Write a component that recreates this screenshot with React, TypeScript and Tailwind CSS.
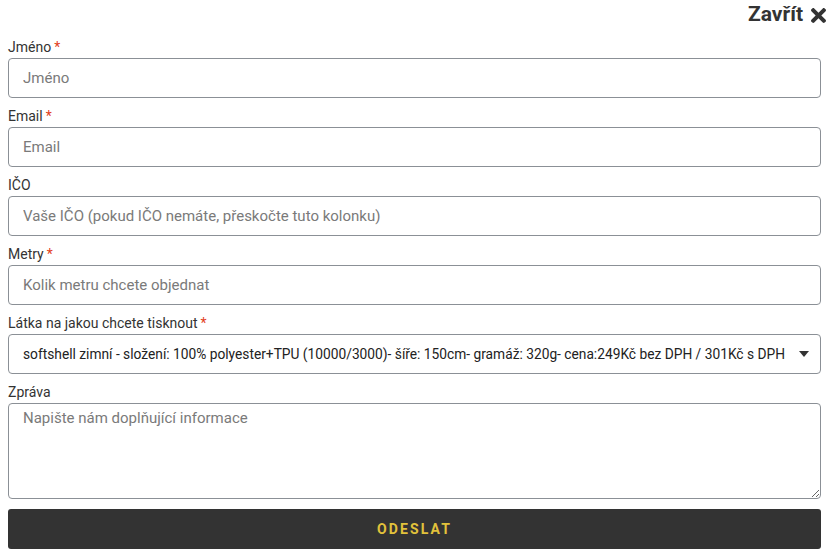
import { useState } from "react";

const font = { fontFamily: "Roboto, 'Noto Sans', sans-serif" };

const inputCls =
  "block w-full h-10 rounded-[4px] border border-[#8b9096] bg-white px-[14px] text-[15px] text-[#333] placeholder:text-[#7a7a7a] outline-none";

function Label({ text, required }: { text: string; required?: boolean }) {
  return (
    <label className="block text-[14px] leading-[20px] text-[#333] mb-px">
      {text}
      {required && <span className="ml-[3px] text-[#e2401c]">*</span>}
    </label>
  );
}

export default function App() {
  const [fabric, setFabric] = useState("softshell");

  return (
    <div className="bg-white min-h-[558px]" style={font}>
      <div className="flex justify-end h-[29px] items-center pr-[2px]">
        <button className="flex items-center gap-[8px] text-[21px] font-bold text-[#333]">
          Zavřít
          <svg width="15" height="15" viewBox="0 80 352 352" className="mt-[2px]">
            <path
              fill="#333"
              d="M242.72 256l100.07-100.07c12.28-12.28 12.28-32.19 0-44.48l-22.24-22.24c-12.28-12.28-32.19-12.28-44.48 0L176 189.28 75.930 89.21c-12.28-12.28-32.19-12.28-44.48 0L9.21 111.45c-12.28 12.28-12.28 32.19 0 44.48L109.28 256 9.21 356.07c-12.28 12.28-12.28 32.19 0 44.48l22.24 22.24c12.28 12.28 32.2 12.28 44.48 0L176 322.72l100.07 100.07c12.28 12.28 32.2 12.28 44.48 0l22.24-22.24c12.28-12.28 12.28-32.19 0-44.48L242.72 256z"
            />
          </svg>
        </button>
      </div>

      <form className="flex flex-col pl-2 pr-[7px]" onSubmit={(e) => e.preventDefault()}>
        <div className="mt-2">
          <Label text="Jméno" required />
          <input className={inputCls} placeholder="Jméno" />
        </div>
        <div className="mt-2">
          <Label text="Email" required />
          <input className={inputCls} placeholder="Email" />
        </div>
        <div className="mt-2">
          <Label text="IČO" />
          <input className={inputCls} placeholder="Vaše IČO (pokud IČO nemáte, přeskočte tuto kolonku)" />
        </div>
        <div className="mt-2">
          <Label text="Metry" required />
          <input className={inputCls} placeholder="Kolik metru chcete objednat" />
        </div>
        <div className="mt-2">
          <Label text="Látka na jakou chcete tisknout" required />
          <div className="relative">
            <select
              value={fabric}
              onChange={(e) => setFabric(e.target.value)}
              className={`${inputCls} appearance-none pr-6 !text-[13.75px] !text-[#222]`}
            >
              <option value="softshell">
                softshell zimní - složení: 100% polyester+TPU (10000/3000)- šíře: 150cm- gramáž: 320g- cena:249Kč bez DPH / 301Kč s DPH
              </option>
            </select>
            <svg
              width="10"
              height="6"
              viewBox="0 0 10 6"
              className="pointer-events-none absolute right-[12px] top-[17px]"
            >
              <path d="M0 0h10L5 6z" fill="#333" />
            </svg>
          </div>
        </div>
        <div className="mt-2">
          <Label text="Zpráva" />
          <textarea
            className="block w-full h-[96px] rounded-[4px] border border-[#8b9096] bg-white px-[14px] py-[3px] text-[15px] text-[#333] placeholder:text-[#7a7a7a] outline-none"
            placeholder="Napište nám doplňující informace"
          />
        </div>
        <button
          type="submit"
          className="mt-[10px] h-10 w-full rounded-[3px] bg-[#333333] text-[14px] font-bold tracking-[0.15em] text-[#e2c23b]"
        >
          ODESLAT
        </button>
      </form>
    </div>
  );
}
